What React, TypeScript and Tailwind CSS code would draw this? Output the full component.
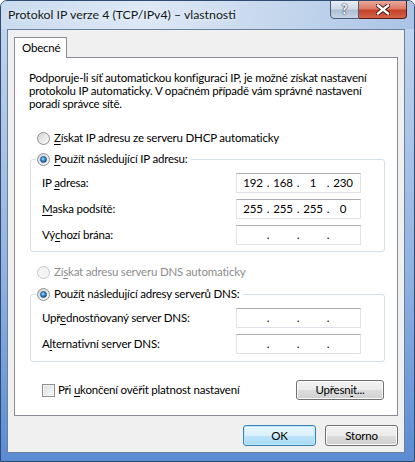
import { Fragment } from "react"

function Radio({ checked = false, disabled = false }: { checked?: boolean; disabled?: boolean }) {
  return (
    <span
      className={`flex items-center justify-center w-[13px] h-[13px] rounded-full border shrink-0 ${
        disabled
          ? "border-[#c5c5c5] bg-[#f4f4f4]"
          : "border-[#8e8f8f] bg-gradient-to-br from-[#d4d4d4] to-[#fbfbfb]"
      }`}
    >
      {checked && (
        <span className="w-[7px] h-[7px] rounded-full bg-[radial-gradient(circle_at_40%_35%,#9fe3ff_0%,#2f8fd8_45%,#0d3f7a_100%)] border border-[#1b4f8a]" />
      )}
    </span>
  )
}

function U({ children }: { children: string }) {
  return <span className="underline underline-offset-2">{children}</span>
}

function IpBox({ parts }: { parts: string[] }) {
  return (
    <div className="w-[125px] h-[20px] bg-white border border-[#dfe2e8] border-t-[#abadb3] flex items-center pl-[3px]">
      {parts.map((p, i) => (
        <Fragment key={i}>
          {i > 0 && <span className="w-[4px] text-center">.</span>}
          <span className="w-[26px] text-center">{p}</span>
        </Fragment>
      ))}
    </div>
  )
}

function Row({ label, parts }: { label: React.ReactNode; parts: string[] }) {
  return (
    <div className="flex items-center justify-between h-[20px]">
      <span>{label}</span>
      <IpBox parts={parts} />
    </div>
  )
}

function WinButton({ children, primary = false }: { children: React.ReactNode; primary?: boolean }) {
  return (
    <button
      className={`w-[73px] h-[21px] rounded-[3px] border flex items-center justify-center ${
        primary
          ? "border-[#3c7fb1] bg-[linear-gradient(#eaf6fd_0%,#d9f0fc_50%,#bee6fd_51%,#a7d9f5_100%)] shadow-[inset_0_0_0_1px_#b9eaff]"
          : "border-[#707070] bg-[linear-gradient(#f2f2f2_0%,#ebebeb_50%,#dddddd_51%,#cfcfcf_100%)] shadow-[inset_0_0_0_1px_#fcfcfc]"
      }`}
    >
      {children}
    </button>
  )
}

const empty = ["", "", "", ""]

export default function App() {
  return (
    <div className="w-[415px] h-[462px] flex flex-col rounded-t-[7px] border border-[#2f4b72] bg-[linear-gradient(180deg,#c4d7ee_0%,#b3cbe9_20%,#8fb2e0_60%,#5b8bd2_100%)] font-['Lato',sans-serif] text-[11.5px] tracking-[-0.2px] leading-[16px] text-black overflow-hidden whitespace-nowrap">
      {/* title bar */}
      <div className="h-[28px] flex items-start bg-[linear-gradient(100deg,#c9dbef_0%,#dde8f5_35%,#c2d5ec_70%,#aac3e6_100%)]">
        <span className="ml-[7px] mt-[6px] text-[12.3px] tracking-normal text-[#101820] [text-shadow:0_0_6px_#ffffff]">
          Protokol IP verze 4 (TCP/IPv4) – vlastnosti
        </span>
        <div className="ml-auto mr-[7px] flex -mt-px">
          <div className="w-[29px] h-[19px] rounded-bl-[4px] border border-[#4b5d78] bg-[linear-gradient(#e8eef5_0%,#cfdbe8_45%,#aebfd4_55%,#c5d4e5_100%)] flex items-center justify-center">
            <span className="text-white font-bold text-[13px] leading-none [text-shadow:0_0_2px_#1d2b40,0_0_1px_#1d2b40]">?</span>
          </div>
          <div className="w-[48px] h-[19px] rounded-br-[4px] border border-l-0 border-[#5a1a12] bg-[linear-gradient(#eaa899_0%,#dc7b66_45%,#c7422b_55%,#d2644a_100%)] flex items-center justify-center">
            <svg width="14" height="11" viewBox="0 0 14 11">
              <path d="M2 1.5 L12 9.5 M12 1.5 L2 9.5" stroke="#3a0c06" strokeWidth="4.2" strokeLinecap="square" />
              <path d="M2 1.5 L12 9.5 M12 1.5 L2 9.5" stroke="#ffffff" strokeWidth="2.4" strokeLinecap="square" />
            </svg>
          </div>
        </div>
      </div>

      {/* client area */}
      <div className="flex-1 ml-[6px] mr-[9px] mb-[8px] border border-[#6a7f9c] bg-[#f0f0f0] pt-[7px] px-[6px] flex flex-col">
        <div className="flex">
          <div className="relative z-10 -mb-px h-[21px] w-[53px] bg-white border border-b-0 border-[#898c95] flex items-center pl-[7px]">
            Obecné
          </div>
        </div>

        <div className="h-[359px] bg-white border border-[#898c95] pl-[14px] pr-[12px] flex flex-col">
          <p className="mt-[13px] leading-[13px]">
            Podporuje-li síť automatickou konfiguraci IP, je možné získat nastavení
            <br />
            protokolu IP automaticky. V opačném případě vám správné nastavení
            <br />
            poradí správce sítě.
          </p>

          <div className="mt-[20px] ml-[8px] h-[16px] flex items-center gap-[4px]">
            <Radio />
            <span>
              <U>Z</U>ískat IP adresu ze serveru DHCP automaticky
            </span>
          </div>

          <div className="relative mt-[13px] ml-[1px] border border-[#d5dfe5] rounded-[3px] pl-[11px] pr-[23px] pt-[13px] pb-[6px] flex flex-col gap-[6px]">
            <div className="absolute -top-[9px] left-[5px] h-[16px] bg-white pl-px pr-[4px] flex items-center gap-[4px]">
              <Radio checked />
              <span>
                <U>P</U>oužít následující IP adresu:
              </span>
            </div>
            <Row
              label={
                <>
                  IP <U>a</U>dresa:
                </>
              }
              parts={["192", "168", "1", "230"]}
            />
            <Row
              label={
                <>
                  <U>M</U>aska podsítě:
                </>
              }
              parts={["255", "255", "255", "0"]}
            />
            <Row
              label={
                <>
                  Vý<U>c</U>hozí brána:
                </>
              }
              parts={empty}
            />
          </div>

          <div className="mt-[12px] ml-[8px] h-[16px] flex items-center gap-[4px] text-[#8d8d8d]">
            <Radio disabled />
            <span>
              Zí<U>s</U>kat adresu serveru DNS automaticky
            </span>
          </div>

          <div className="relative mt-[14px] ml-[1px] border border-[#d5dfe5] rounded-[3px] pl-[11px] pr-[23px] pt-[13px] pb-[7px] flex flex-col gap-[6px]">
            <div className="absolute -top-[9px] left-[5px] h-[16px] bg-white pl-px pr-[4px] flex items-center gap-[4px]">
              <Radio checked />
              <span>
                Použí<U>t</U> následující adresy serverů DNS:
              </span>
            </div>
            <Row
              label={
                <>
                  Upř<U>e</U>dnostňovaný server DNS:
                </>
              }
              parts={empty}
            />
            <Row
              label={
                <>
                  A<U>l</U>ternativní server DNS:
                </>
              }
              parts={empty}
            />
          </div>

          <div className="mt-[18px] h-[20px] flex items-center">
            <span className="ml-[13px] w-[13px] h-[13px] border border-[#8e8f8f] bg-gradient-to-br from-[#dcdcdc] to-[#fbfbfb] shadow-[inset_0_0_0_1px_#f4f4f4]" />
            <span className="ml-[3px]">
              Při <U>u</U>končení ověřit platnost nastavení
            </span>
            <div className="ml-auto mr-px">
              <button className="w-[88px] h-[20px] rounded-[3px] border border-[#707070] bg-[linear-gradient(#f2f2f2_0%,#ebebeb_50%,#dddddd_51%,#cfcfcf_100%)] shadow-[inset_0_0_0_1px_#fcfcfc] flex items-center justify-center">
                <span>
                  Upřesn<U>i</U>t...
                </span>
              </button>
            </div>
          </div>
        </div>

        <div className="mt-[9px] flex justify-end gap-[9px]">
          <WinButton primary>OK</WinButton>
          <WinButton>Storno</WinButton>
        </div>
      </div>
    </div>
  )
}
